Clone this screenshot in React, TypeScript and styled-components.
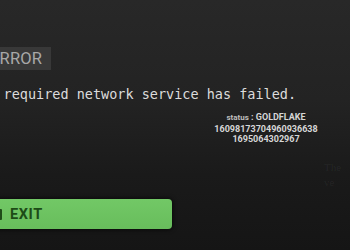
import React from "react";
import styled, { createGlobalStyle } from "styled-components";

const Global = createGlobalStyle`
  html, body { margin: 0; padding: 0; background: #1c1c1c; }
  #root { width: 350px; height: 250px; }
`;

const Screen = styled.div`
  position: relative;
  width: 350px;
  height: 250px;
  overflow: hidden;
  background: linear-gradient(180deg, #282828 0%, #232323 40%, #1a1a1a 70%, #151515 100%);
  display: flex;
  flex-direction: column;
`;

const TitleBox = styled.div`
  align-self: flex-start;
  margin-top: 47px;
  margin-left: -12px;
  height: 23px;
  padding: 0 9px 0 2px;
  background: #383838;
  display: flex;
  align-items: center;
  font-family: Roboto, "Liberation Sans", sans-serif;
  font-size: 16.5px;
  letter-spacing: 0.2px;
  color: #a8a8a8;
`;

const Message = styled.div`
  margin-top: 16px;
  margin-left: -29px;
  white-space: nowrap;
  font-family: "DejaVu Sans Mono", monospace;
  font-size: 13.5px;
  line-height: 16px;
  color: #dcdcdc;
`;

const Status = styled.div`
  margin-top: 10px;
  margin-left: 206px;
  width: 120px;
  text-align: center;
  font-family: Roboto, "Liberation Sans", sans-serif;
  font-weight: 700;
  font-size: 9px;
  line-height: 10.5px;
  color: #d6d6d6;
`;

const StatusLabel = styled.span`
  font-size: 8px;
  color: #bdbdbd;
`;

const ExitButton = styled.div`
  margin-top: auto;
  margin-bottom: 21px;
  margin-left: -12px;
  width: 184px;
  height: 30px;
  border-radius: 4px;
  background: linear-gradient(180deg, #72c866 0%, #68bd5c 100%);
  box-shadow: 0 0 4px 1px rgba(0, 0, 0, 0.6);
  display: flex;
  align-items: center;
  gap: 8px;
  padding-left: 8px;
  box-sizing: border-box;
`;

const KeyIcon = styled.span`
  width: 6px;
  height: 11px;
  background: #1f4c19;
  border-radius: 1px;
`;

const ExitLabel = styled.span`
  font-family: Roboto, "Liberation Sans", sans-serif;
  font-weight: 700;
  font-size: 14.5px;
  letter-spacing: 0.6px;
  color: #1d4b17;
`;

const Ghost = styled.div`
  position: absolute;
  left: 324px;
  top: 160px;
  font-family: "Liberation Serif", serif;
  font-size: 11px;
  line-height: 15px;
  color: rgba(255, 255, 255, 0.06);
`;

export default function App() {
  return (
    <>
      <Global />
      <Screen>
        <TitleBox>ERROR</TitleBox>
        <Message>The required network service has failed.</Message>
        <Status>
          <StatusLabel>status</StatusLabel> : GOLDFLAKE
          <br />
          16098173704960936638
          <br />
          1695064302967
        </Status>
        <ExitButton>
          <KeyIcon />
          <ExitLabel>EXIT</ExitLabel>
        </ExitButton>
        <Ghost>
          The
          <br />
          ve
        </Ghost>
      </Screen>
    </>
  );
}
